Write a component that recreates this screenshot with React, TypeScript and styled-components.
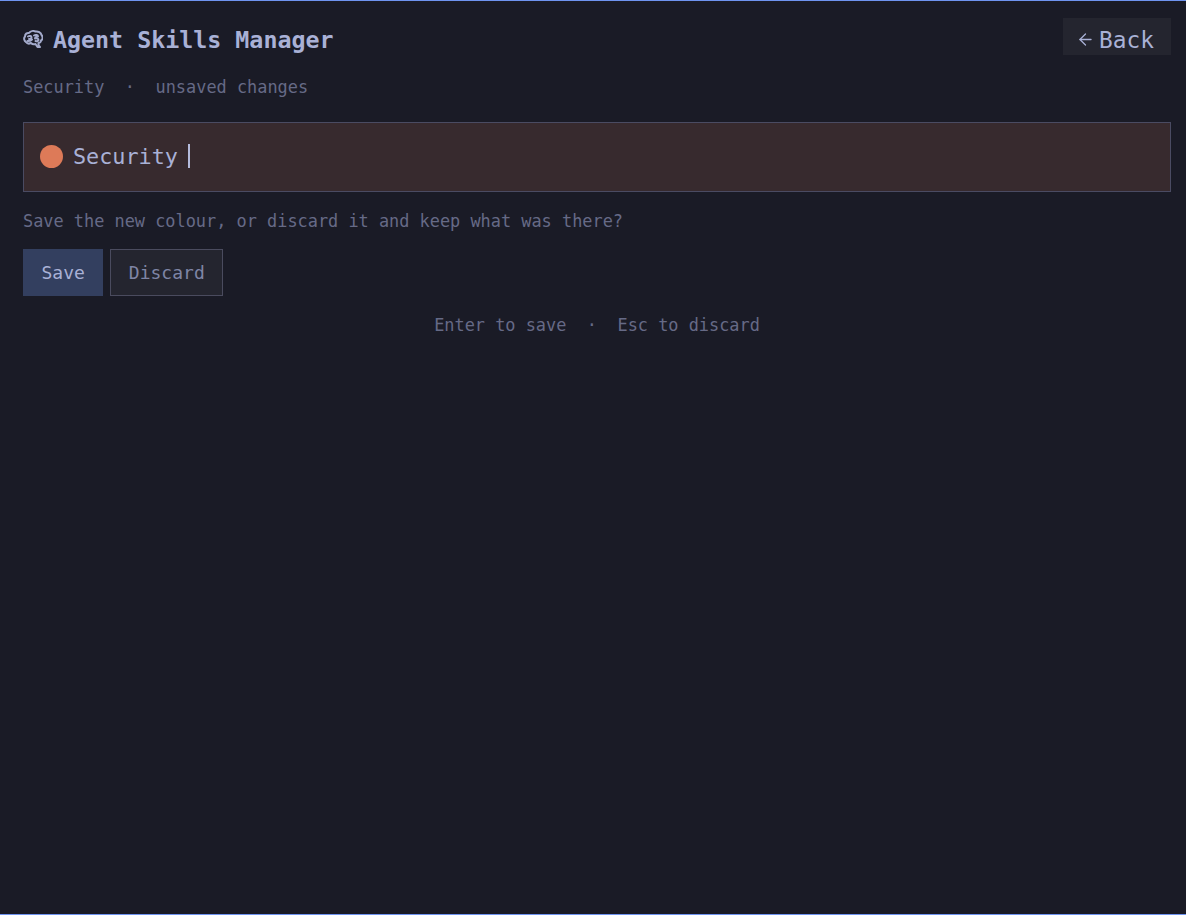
import * as React from "react";
import styled, {createGlobalStyle} from "styled-components";
import {ArrowLeft} from "lucide-react";

const GlobalStyle = createGlobalStyle`
    html, body {
        margin: 0;
        height: 100%;
        background: #1a1b26;
    }
`;

const Screen = styled.div`
    box-sizing: border-box;
    height: 915px;
    padding: 17px 15px 0 23px;
    background: #1a1b26;
    border-top: 1px solid #6f94f0;
    border-bottom: 1px solid #6f94f0;
    font-family: "DejaVu Sans Mono", "Liberation Mono", monospace;
    color: #a9b1d6;
`;

const Header = styled.div`
    display: flex;
    justify-content: space-between;
    align-items: center;
    height: 37px;
`;

const Title = styled.h1`
    display: flex;
    align-items: center;
    gap: 10px;
    margin: 0;
    padding-top: 5px;
    font-size: 23.3px;
    font-weight: 700;
    color: #a9b1d6;
`;

const BrainIcon = styled.svg`
    width: 20px;
    height: 18px;
    fill: none;
    stroke: #a3aacb;
    stroke-width: 2;
    stroke-linejoin: round;
    stroke-linecap: round;
`;

const BackButton = styled.button`
    box-sizing: border-box;
    display: flex;
    align-items: center;
    gap: 4px;
    width: 108px;
    height: 37px;
    padding: 6px 0 0 13px;
    border: none;
    background: #24252f;
    color: #a9b1d6;
    font-family: inherit;
    font-size: 22.8px;
`;

const Subtitle = styled.div`
    display: flex;
    gap: 20.5px;
    margin-top: 22px;
    font-size: 16.9px;
    line-height: 20px;
    color: #666a86;
`;

const NameField = styled.div`
    box-sizing: border-box;
    display: flex;
    align-items: center;
    height: 70px;
    margin-top: 25px;
    padding: 0 16px 2px;
    background: #372a2e;
    border: 1px solid #4a4b62;
`;

const Dot = styled.span<{$colour: string}>`
    width: 23px;
    height: 23px;
    border-radius: 50%;
    background: ${({$colour}) => $colour};
`;

const NameText = styled.span`
    margin-left: 10px;
    font-size: 21.8px;
    color: #a9b1d6;
`;

const Caret = styled.span`
    width: 2px;
    height: 24px;
    margin-left: 10px;
    background: #b4bbdc;
`;

const Prompt = styled.div`
    margin-top: 19px;
    font-size: 16.9px;
    line-height: 20px;
    color: #666a86;
`;

const Actions = styled.div`
    display: flex;
    gap: 7px;
    margin-top: 18px;
`;

const ActionButton = styled.button<{$primary?: boolean}>`
    box-sizing: border-box;
    height: 47px;
    padding: 0 17.5px;
    border: 1px solid ${({$primary}) => ($primary ? "#333f5f" : "#4a4b5e")};
    background: ${({$primary}) => ($primary ? "#333f5f" : "#24252f")};
    color: ${({$primary}) => ($primary ? "#a9b1d6" : "#7f85a6")};
    font-family: inherit;
    font-size: 18px;
`;

const Hint = styled.div`
    display: flex;
    justify-content: center;
    gap: 20.5px;
    margin-top: 19px;
    font-size: 16.9px;
    line-height: 20px;
    color: #666a86;
`;

const App: React.FC = (): JSX.Element => {
    return (
        <Screen>
            <GlobalStyle />
            <Header>
                <Title>
                    <BrainIcon viewBox="0 0 20 18">
                        <path d="M3 12C1 11 .5 8 2 6.5 2 4 4 2.5 6 3 7.5 1 10.5.5 12.5 1.5 15 1 18 2.5 18.5 5 20 6.5 20 9.5 18 10.5 18 12 16.5 13 15.5 13L15.5 15 17 17 14.5 17 12.5 14C11 14.5 9 14 8 13 6 14 4 13.5 3 12Z" />
                        <path d="M5 6.5C6.5 5.5 8.5 6 8.5 7.5 8.5 9 7 9 6 9M4.5 11C6 11.2 8 10.5 9 9.5" />
                        <path d="M11 5.5C12.5 4.5 15 5 15 6.5 13.5 6.5 12 7.5 12 8.5 13.5 8 15.5 8.5 15.5 10 15.5 11 14 11.5 12.5 11" />
                    </BrainIcon>
                    Agent Skills Manager
                </Title>
                <BackButton>
                    <ArrowLeft size={19} strokeWidth={1.6} />
                    Back
                </BackButton>
            </Header>
            <Subtitle>
                <span>Security</span>
                <span>·</span>
                <span>unsaved changes</span>
            </Subtitle>
            <NameField>
                <Dot $colour="#dd7a58" />
                <NameText>Security</NameText>
                <Caret />
            </NameField>
            <Prompt>Save the new colour, or discard it and keep what was there?</Prompt>
            <Actions>
                <ActionButton $primary>Save</ActionButton>
                <ActionButton>Discard</ActionButton>
            </Actions>
            <Hint>
                <span>Enter to save</span>
                <span>·</span>
                <span>Esc to discard</span>
            </Hint>
        </Screen>
    );
};

export default App;
